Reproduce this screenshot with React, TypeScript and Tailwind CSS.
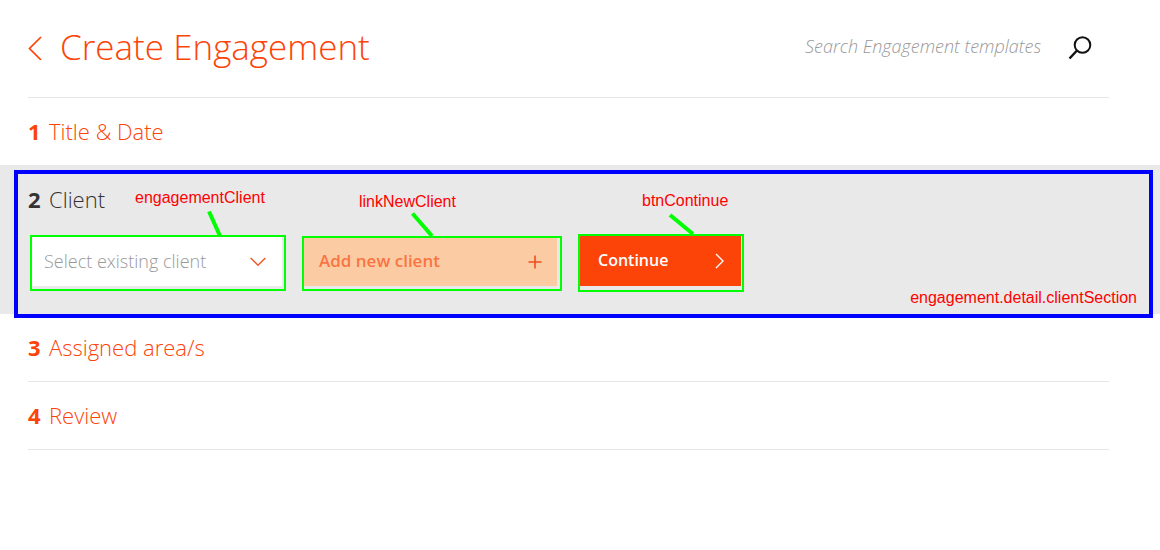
import type { ReactNode } from "react";

type StepProps = { number: number; title: string; className?: string };

function StepHeading({ number, title, className = "" }: StepProps) {
  return (
    <h2 className={`flex items-center text-[22px] leading-8 font-light ${className}`}>
      <span className="w-[21px] font-bold">{number}</span>
      {title}
    </h2>
  );
}

function StepRow({ number, title, divider = true }: StepProps & { divider?: boolean }) {
  return (
    <a
      href={`#step-${number}`}
      className={`mr-[51px] ml-7 block pt-[17px] pb-[18px] text-[#fc4308] ${divider ? "border-b border-[#e6e6e6]" : ""}`}
    >
      <StepHeading number={number} title={title} />
    </a>
  );
}

function Highlight({ className, children }: { className: string; children: ReactNode }) {
  return <div className={`relative shrink-0 border-2 border-[#00ff00] ${className}`}>{children}</div>;
}

function Label({ className, children }: { className: string; children: ReactNode }) {
  return (
    <span className={`absolute font-['Liberation_Sans',sans-serif] text-base leading-5 text-[#ff0000] ${className}`}>
      {children}
    </span>
  );
}

function Annotations() {
  return (
    <div className="pointer-events-none absolute inset-0">
      <div className="absolute top-[5px] right-[7px] -bottom-1 left-3.5 border-4 border-[#0000ff]" />
      <svg className="absolute top-0 left-0" width="760" height="80" fill="none" stroke="#00ff00" strokeWidth="4" aria-hidden="true">
        <path d="M209 46.500L220 71M412.500 48.500L432 71M670 50L693 69" />
      </svg>
      <Label className="top-[23px] left-[135px]">engagementClient</Label>
      <Label className="top-[27px] left-[359px]">linkNewClient</Label>
      <Label className="top-[26px] left-[642px]">btnContinue</Label>
      <Label className="right-[23px] bottom-[6px]">engagement.detail.clientSection</Label>
    </div>
  );
}

export default function App() {
  return (
    <main className="min-h-screen bg-white font-['Open_Sans',sans-serif]">
      <header className="mr-[51px] ml-7 flex items-center justify-between border-b border-[#e6e6e6] pt-6 pb-[25px] text-[#fc4308]">
        <div className="flex items-center">
          <button type="button" aria-label="Back" className="mr-[18px]">
            <svg width="14" height="24" viewBox="0 0 14 24" fill="none" stroke="currentColor" strokeWidth="1.700">
              <path d="M13 1L1.500 12.500L13 24" />
            </svg>
          </button>
          <h1 className="pb-0.5 text-[35px] leading-[46px] font-light">Create Engagement</h1>
        </div>
        <form role="search" className="mr-[17px] flex items-center" onSubmit={(e) => e.preventDefault()}>
          <input
            type="search"
            aria-label="Search Engagement templates"
            placeholder="Search Engagement templates"
            className="w-[263px] pb-1 text-lg leading-6 font-light text-[#333333] italic outline-none placeholder:text-[#999999]"
          />
          <button type="submit" aria-label="Search">
            <svg width="24" height="24" viewBox="0 0 24 24" fill="none" stroke="#111111" strokeWidth="2">
              <circle cx="14.500" cy="9" r="7.800" />
              <path d="M9 14.500L1.500 22.500" strokeWidth="2.400" />
            </svg>
          </button>
        </form>
      </header>

      <StepRow number={1} title="Title & Date" divider={false} />

      <section className="relative bg-[#e9e9e9] pt-[18px] pb-[22px]">
        <StepHeading number={2} title="Client" className="ml-7 text-[#333333]" />
        <div className="mt-[19px] ml-[30px] flex items-center gap-4">
          <Highlight className="w-64 pr-0.5 pb-[3px]">
            <select
              aria-label="Client"
              defaultValue=""
              className="block h-[49px] w-full appearance-none bg-white pb-0.5 pl-3 text-lg font-light text-[#999999]"
            >
              <option value="">Select existing client</option>
            </select>
            <svg className="pointer-events-none absolute top-5 right-[18px]" width="16" height="10" viewBox="0 0 16 10" fill="none" stroke="#f05a28" strokeWidth="1.500">
              <path d="M.7 1L8 8.300L15.300 1" />
            </svg>
          </Highlight>
          <Highlight className="w-[260px] pr-[3px] pb-[3px]">
            <button
              type="button"
              className="flex h-12 w-full items-center justify-between bg-[#fbcca4] pr-[15px] pl-[15px] text-[17px] font-semibold text-[#fa7443]"
            >
              <span className="pb-0.5">Add new client</span>
              <svg width="14" height="14" viewBox="0 0 14 14" fill="none" stroke="#f04e1c" strokeWidth="1.600">
                <path d="M7 .5V13.500M.5 7H13.500" />
              </svg>
            </button>
          </Highlight>
          <Highlight className="w-[166px] pr-px pb-1">
            <button
              type="button"
              className="flex h-[50px] w-full items-center justify-between bg-[#fc4308] pr-[17px] pl-[18px] text-base font-semibold text-white"
            >
              <span className="pb-0.5">Continue</span>
              <svg width="9" height="16" viewBox="0 0 9 16" fill="none" stroke="currentColor" strokeWidth="1.400">
                <path d="M1 1L8 8L1 15" />
              </svg>
            </button>
          </Highlight>
        </div>
        <Annotations />
      </section>

      <StepRow number={3} title="Assigned area/s" />
      <StepRow number={4} title="Review" />
    </main>
  );
}
